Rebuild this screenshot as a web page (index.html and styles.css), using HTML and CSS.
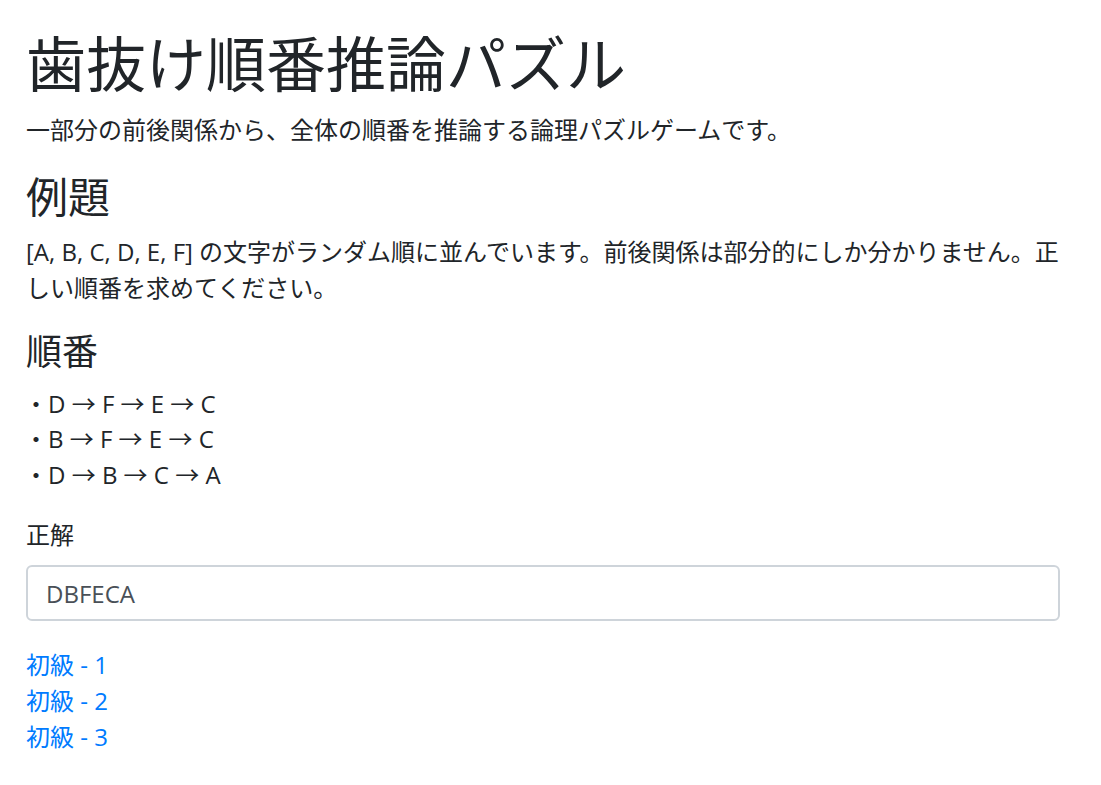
FILE: index.html
```html
<!DOCTYPE html>
<html lang="ja">
<head>
<meta charset="utf-8">
<title>歯抜け順番推論パズル</title>
<link rel="stylesheet" href="styles.css">
</head>
<body>
<main class="container">
  <h1 class="title">歯抜け順番推論パズル</h1>
  <p class="text">一部分の前後関係から、全体の順番を推論する論理パズルゲームです。</p>

  <h3 class="h-example">例題</h3>
  <p class="text">[A, B, C, D, E, F] の文字がランダム順に並んでいます。前後関係は部分的にしか分かりません。正しい順番を求めてください。</p>

  <h4 class="h-order">順番</h4>
  <div class="orders">
    <div class="order">・D → F → E → C</div>
    <div class="order">・B → F → E → C</div>
    <div class="order">・D → B → C → A</div>
  </div>

  <div class="form-group">
    <label class="label" for="answer">正解</label>
    <input class="input" id="answer" type="text" value="DBFECA">
  </div>

  <div class="links">
    <a class="link" href="#">初級 - 1</a>
    <a class="link" href="#">初級 - 2</a>
    <a class="link" href="#">初級 - 3</a>
  </div>
</main>
</body>
</html>
```

FILE: styles.css
```css
* { box-sizing: border-box; }

html, body {
  margin: 0;
  padding: 0;
  background: #fff;
}

body {
  font-family: "Open Sans", "Noto Sans CJK JP", sans-serif;
  font-size: 24px;
  line-height: 1.5;
  color: #212529;
}

.container {
  padding: 28px 41px 0 26px;
  display: flex;
  flex-direction: column;
}

.title,
.h-example,
.h-order {
  margin: 0 0 12px 0;
  font-weight: 400;
  line-height: 1.2;
}

.title { font-size: 60px; }
.h-example { font-size: 42px; }
.h-order { font-size: 36px; }

.text {
  margin: 0 0 24px 0;
}

.orders {
  margin-bottom: 25px;
  display: flex;
  flex-direction: column;
}

.order {
  margin-left: -2px;
  height: 35.5px;
}

.form-group {
  display: flex;
  flex-direction: column;
  margin-bottom: 26px;
}

.label {
  margin-bottom: 12px;
}

.input {
  width: 100%;
  height: 56px;
  padding: 9px 18px;
  font-family: inherit;
  font-size: 24px;
  line-height: 1.5;
  color: #495057;
  background: #fff;
  border: 2px solid #ced4da;
  border-radius: 6px;
  outline: none;
}

.links {
  display: flex;
  flex-direction: column;
  align-items: flex-start;
}

.link {
  color: #007bff;
  text-decoration: none;
}
```
